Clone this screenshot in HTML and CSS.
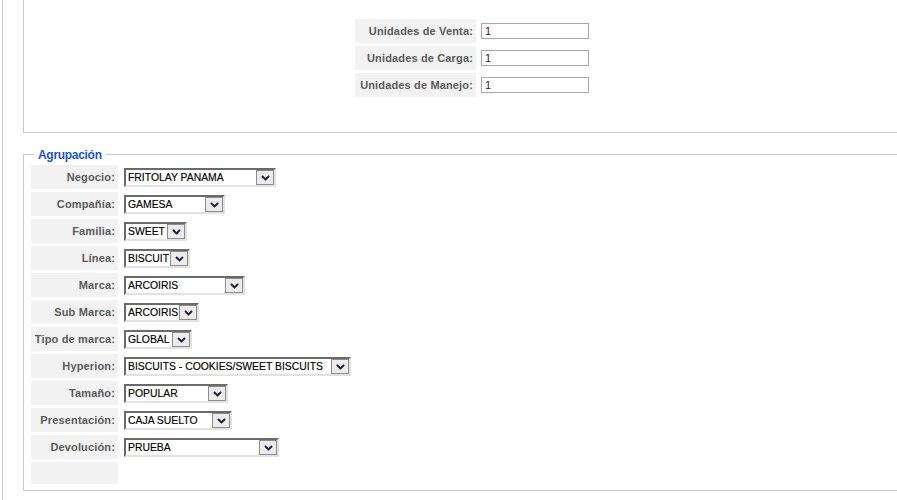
FILE: index.html
```html
<!DOCTYPE html>
<html lang="es">
<head>
<meta charset="utf-8">
<title>Producto</title>
<link rel="stylesheet" href="styles.css">
</head>
<body>
<div class="page">
  <div class="box-top">
    <div class="grid top-grid">
      <div class="lbl">Unidades de Venta:</div>
      <div class="fld"><input class="inp" type="text" value="1"></div>
      <div class="lbl">Unidades de Carga:</div>
      <div class="fld"><input class="inp" type="text" value="1"></div>
      <div class="lbl">Unidades de Manejo:</div>
      <div class="fld"><input class="inp" type="text" value="1"></div>
    </div>
  </div>

  <fieldset class="group">
    <legend class="group-title">Agrupación</legend>
    <div class="grid group-grid">
      <div class="lbl">Negocio:</div>
      <div class="fld"><div class="sel" style="width:152px"><span class="sel-text">FRITOLAY PANAMA</span><span class="sel-btn"><svg width="9" height="6" viewBox="0 0 9 6"><polyline points="1,1 4.5,4.5 8,1"/></svg></span></div></div>

      <div class="lbl">Compañía:</div>
      <div class="fld"><div class="sel" style="width:101px"><span class="sel-text">GAMESA</span><span class="sel-btn"><svg width="9" height="6" viewBox="0 0 9 6"><polyline points="1,1 4.5,4.5 8,1"/></svg></span></div></div>

      <div class="lbl">Familia:</div>
      <div class="fld"><div class="sel" style="width:63px"><span class="sel-text">SWEET</span><span class="sel-btn"><svg width="9" height="6" viewBox="0 0 9 6"><polyline points="1,1 4.5,4.5 8,1"/></svg></span></div></div>

      <div class="lbl">Línea:</div>
      <div class="fld"><div class="sel" style="width:66px"><span class="sel-text">BISCUIT</span><span class="sel-btn"><svg width="9" height="6" viewBox="0 0 9 6"><polyline points="1,1 4.5,4.5 8,1"/></svg></span></div></div>

      <div class="lbl">Marca:</div>
      <div class="fld"><div class="sel" style="width:121px"><span class="sel-text">ARCOIRIS</span><span class="sel-btn"><svg width="9" height="6" viewBox="0 0 9 6"><polyline points="1,1 4.5,4.5 8,1"/></svg></span></div></div>

      <div class="lbl">Sub Marca:</div>
      <div class="fld"><div class="sel" style="width:75px"><span class="sel-text">ARCOIRIS</span><span class="sel-btn"><svg width="9" height="6" viewBox="0 0 9 6"><polyline points="1,1 4.5,4.5 8,1"/></svg></span></div></div>

      <div class="lbl">Tipo de marca:</div>
      <div class="fld"><div class="sel" style="width:68px"><span class="sel-text">GLOBAL</span><span class="sel-btn"><svg width="9" height="6" viewBox="0 0 9 6"><polyline points="1,1 4.5,4.5 8,1"/></svg></span></div></div>

      <div class="lbl">Hyperion:</div>
      <div class="fld"><div class="sel" style="width:227px"><span class="sel-text">BISCUITS - COOKIES/SWEET BISCUITS</span><span class="sel-btn"><svg width="9" height="6" viewBox="0 0 9 6"><polyline points="1,1 4.5,4.5 8,1"/></svg></span></div></div>

      <div class="lbl">Tamaño:</div>
      <div class="fld"><div class="sel" style="width:104px"><span class="sel-text">POPULAR</span><span class="sel-btn"><svg width="9" height="6" viewBox="0 0 9 6"><polyline points="1,1 4.5,4.5 8,1"/></svg></span></div></div>

      <div class="lbl">Presentación:</div>
      <div class="fld"><div class="sel" style="width:108px"><span class="sel-text">CAJA SUELTO</span><span class="sel-btn"><svg width="9" height="6" viewBox="0 0 9 6"><polyline points="1,1 4.5,4.5 8,1"/></svg></span></div></div>

      <div class="lbl">Devolución:</div>
      <div class="fld"><div class="sel" style="width:155px"><span class="sel-text">PRUEBA</span><span class="sel-btn"><svg width="9" height="6" viewBox="0 0 9 6"><polyline points="1,1 4.5,4.5 8,1"/></svg></span></div></div>

      <div class="lbl lbl-empty"></div>
      <div class="fld"></div>
    </div>
  </fieldset>
</div>
</body>
</html>
```

FILE: styles.css
```css
html, body {
  margin: 0;
  padding: 0;
  overflow: hidden;
  background: #ffffff;
}

body {
  font-family: "Liberation Sans", Arial, sans-serif;
  font-size: 11px;
  color: #000;
}

.page {
  margin-left: 2px;
  border-left: 1px solid #cccccc;
  padding-left: 20px;
  width: 898px;
  height: 500px;
}

.box-top {
  border-left: 1px solid #c9c9c9;
  border-right: 1px solid #c9c9c9;
  border-bottom: 1px solid #c9c9c9;
  padding: 19px 0 35px;
  display: flex;
  justify-content: center;
}

.grid {
  display: grid;
  column-gap: 3px;
  row-gap: 3px;
  grid-auto-rows: 24px;
}

.top-grid {
  grid-template-columns: 121px auto;
  margin-left: 2px;
}

.lbl {
  background: #f2f2f2;
  color: #5a5a5a;
  font-weight: bold;
  font-size: 11px;
  letter-spacing: 0.15px;
  display: flex;
  align-items: center;
  justify-content: flex-end;
  padding-right: 3px;
  white-space: nowrap;
}

.fld {
  display: flex;
  align-items: center;
  padding: 0 2px;
}

.inp {
  box-sizing: border-box;
  width: 108px;
  height: 16px;
  margin: 0;
  border: 1px solid #a8a8a8;
  padding: 0 3px;
  font-family: "Liberation Sans", Arial, sans-serif;
  font-size: 11px;
  color: #4a0a50;
  background: #fff;
  outline: none;
}

.group {
  margin: 13px 0 0;
  border: 1px solid #c9c9c9;
  padding: 3px 7px 6px;
}

.group-title {
  margin-left: 3px;
  padding: 2px 4px 0;
  font-size: 12px;
  line-height: 14px;
  font-weight: bold;
  letter-spacing: -0.3px;
  color: #2354c6;
}

.group-grid {
  grid-template-columns: 87px auto;
  grid-template-rows: repeat(11, 24px) 22px;
}

.group-grid .fld {
  align-items: flex-start;
  padding: 3px 0 0 3px;
}

.sel {
  box-sizing: border-box;
  height: 19px;
  display: flex;
  border-top: 2px solid #6a6a6a;
  border-left: 2px solid #6a6a6a;
  border-right: 2px solid #e2e2e2;
  border-bottom: 2px solid #e2e2e2;
  background: #fff;
}

.sel-text {
  flex: 1;
  font-size: 10.4px;
  line-height: 15px;
  padding-left: 2px;
  white-space: nowrap;
  overflow: hidden;
  color: #000;
  -webkit-text-stroke: 0.15px #000;
}

.sel-btn {
  box-sizing: border-box;
  width: 18px;
  height: 15px;
  border: 1px solid #8c8c8c;
  background: #ececec;
  display: flex;
  align-items: center;
  justify-content: center;
}

.sel-btn svg {
  display: block;
}

.sel-btn polyline {
  fill: none;
  stroke: #1c1c3c;
  stroke-width: 1.9;
}
```
